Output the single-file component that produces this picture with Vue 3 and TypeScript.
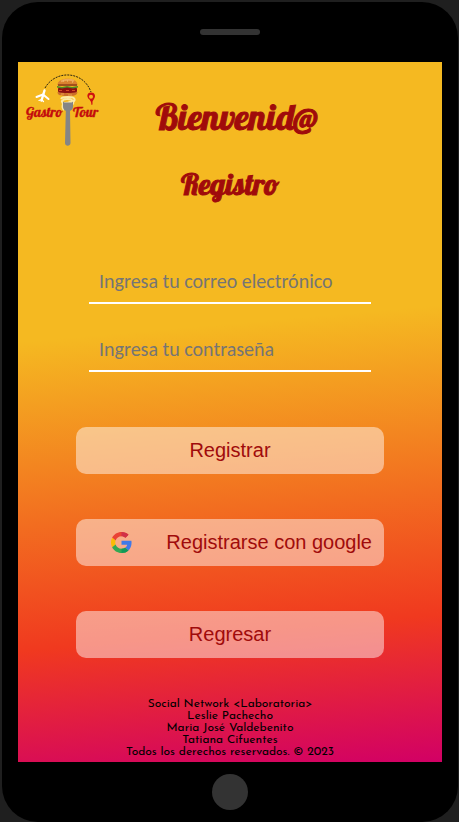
<script setup lang="ts">
import { ref } from 'vue'

const email = ref<string>('')
const password = ref<string>('')

const credits: string[] = [
  'Social Network <Laboratoria>',
  'Leslie Pachecho',
  'Maria José Valdebenito',
  'Tatiana Cifuentes',
  'Todos los derechos reservados. © 2023',
]
</script>

<template>
  <div class="phone">
    <div class="bezel"><span class="speaker"></span></div>

    <main class="screen">
      <header class="header">
        <svg class="logo" viewBox="0 0 84 84" role="img" aria-label="Gastro Tour">
          <path d="M25 22C35 4 63 4 71 26" fill="none" stroke="#2b2410" stroke-width="1" stroke-dasharray="2 1" />
          <g fill="none" stroke="#fff" stroke-linecap="round" stroke-linejoin="round">
            <path d="M24.500 24.500L21.500 34.500" stroke-width="2.400" />
            <path d="M16.500 31L23 28.500L28.500 33" stroke-width="2" />
            <path d="M19 34.500L21.500 33.500L23.500 35.500" stroke-width="1.200" />
          </g>
          <path d="M37.500 19C37 10.500 58 10.500 57.500 19z" fill="#d9822f" />
          <path d="M41 15.500c3-2 10-2.500 13-.5" fill="none" stroke="#efa957" stroke-width="2" />
          <path d="M43 15h1m3 0h1m4 1h1" stroke="#f3c77c" />
          <rect x="38" y="18" width="19" height="2" fill="#a3501c" />
          <rect x="38" y="21" width="19" height="6" rx="2" fill="#8e1010" />
          <path d="M37 20l5 1 5-1 5 1 6-1v1.500l-5 1-6-1-5 1-5-1z" fill="#4f8d25" />
          <path d="M39 24.500h3m4 0h3m3 0h3" stroke="#d84a28" />
          <path d="M37.500 26c6 1.500 14 1.500 20 0-.5 3.500-3 4-10 4s-10-.5-10-4z" fill="#cc6f2a" />
          <path d="M41 28h3m4 1h4" stroke="#eba04e" />
          <path
            d="M41 33c2-3 12-2 13-.5 2 2-1 4-4 3.500-4 2-9 1-8-1s8-3 11 0c1 2-1 5-3 4M42 37c3 2 7-1 10 1M43 38c-1 3 0 5 1 6"
            fill="none"
            stroke="#fbe9a6"
            stroke-width="2"
          />
          <path
            d="M43 36.500c0-1 1-1 1.200 0h7.600c.2-1 1.200-1 1.200 0v4.500c0 2-1.500 3-3 4l.5 32c0 3.500-5.500 3.500-5.500 0l.8-32c-1.300-.8-2.800-2-2.800-4z"
            fill="#858585"
          />
          <path
            d="M71 26.500c-4.500 0-4.500 5-1.500 7l1.500 2.500.5 3 1-.5v-3l1.500-2.500c2-3 1-6.500-3-6.500zm0 2.200a2 2 0 1 1 0 4 2 2 0 0 1 0-4z"
            fill="#cf1010"
            fill-rule="evenodd"
          />
          <text x="6" y="51">Gastro</text>
          <text x="53" y="51">Tour</text>
        </svg>
        <div class="titles">
          <h1>Bienvenid@</h1>
          <h2>Registro</h2>
        </div>
      </header>

      <form class="form" @submit.prevent>
        <div class="fields">
          <input v-model="email" type="email" aria-label="Correo electrónico" placeholder="Ingresa tu correo electrónico" />
          <input v-model="password" type="password" aria-label="Contraseña" placeholder="Ingresa tu contraseña" />
        </div>
        <div class="actions">
          <button type="submit">Registrar</button>
          <button type="button" class="google">
            <svg class="google-icon" viewBox="0 0 48 48" aria-hidden="true">
              <path fill="#ea4335" d="M24 9.500c3.540 0 6.710 1.220 9.210 3.600l6.850-6.850C35.900 2.380 30.470 0 24 0 14.620 0 6.510 5.380 2.560 13.220l7.980 6.190C12.430 13.720 17.740 9.500 24 9.500z" />
              <path fill="#d13048" d="M24 9.500c3.540 0 6.710 1.220 9.210 3.600l6.850-6.850C35.900 2.380 30.470 0 24 0z" />
              <path fill="#4079e8" d="M46.980 24.550c0-1.570-.15-3.090-.38-4.550H24v9.020h12.940c-.58 2.960-2.260 5.480-4.780 7.180l7.730 6c4.510-4.180 7.090-10.360 7.090-17.650z" />
              <path fill="#fbbc05" d="M10.530 28.590c-.48-1.450-.76-2.990-.76-4.590s.27-3.140.76-4.590l-7.980-6.190C.92 16.460 0 20.120 0 24c0 3.880.92 7.540 2.560 10.780z" />
              <path fill="#34a853" d="M24 48c6.480 0 11.930-2.130 15.890-5.810l-7.730-6c-2.150 1.450-4.920 2.300-8.160 2.300-6.260 0-11.570-4.220-13.470-9.910l-7.980 6.190C6.510 42.620 14.620 48 24 48z" />
              <path fill="#129958" d="M24 48c6.480 0 11.930-2.130 15.890-5.810l-7.730-6c-2.150 1.450-4.920 2.300-8.160 2.300z" />
            </svg>
            <span>Registrarse con google</span>
          </button>
          <button type="button">Regresar</button>
        </div>
      </form>

      <footer class="footer">
        <p v-for="line in credits" :key="line">{{ line }}</p>
      </footer>
    </main>

    <div class="bezel"><span class="home"></span></div>
  </div>
</template>

<style>
body {
  margin: 0;
  background: #1f1f1f;
}
</style>

<style scoped>
.phone {
  box-sizing: border-box;
  margin: 2px 1px 0 2px;
  padding: 0 16px;
  border-radius: 36px;
  background: #000;
}

.bezel {
  display: flex;
  align-items: center;
  justify-content: center;
  height: 60px;
}

.speaker {
  width: 60px;
  height: 6px;
  border-radius: 3px;
  background: #333;
}

.home {
  width: 36px;
  height: 36px;
  border-radius: 50%;
  background: #333;
}

.screen {
  display: flex;
  flex-direction: column;
  background: linear-gradient(175deg, #f5b921 0%, #f5b921 38%, #f0391f 80%, #d20065 100%);
}

.header {
  display: grid;
  grid-template-columns: 1fr auto 1fr;
}

.logo {
  width: 84px;
  height: 84px;
  margin: 4px 0 0 2px;
}

.logo text {
  font: 14px Lobster, "Liberation Serif", serif;
  fill: #c40d0d;
  stroke: #c40d0d;
  stroke-width: 0.3px;
}

.titles {
  padding-top: 30px;
  color: #a00b0b;
  text-align: center;
}

h1,
h2 {
  margin: 0;
  font-family: Lobster, "Liberation Serif", serif;
  font-weight: normal;
  -webkit-text-stroke: 1px #a00b0b;
}

h1 {
  padding-left: 14px;
  font-size: 36px;
  line-height: 50px;
}

h2 {
  margin-top: 22px;
  font-size: 30px;
  line-height: 40px;
}

.form {
  display: flex;
  flex-direction: column;
  gap: 55px;
  margin: 56px 58px 0;
}

.fields {
  display: flex;
  flex-direction: column;
  gap: 24px;
  padding: 0 13px;
}

input {
  box-sizing: border-box;
  width: 100%;
  height: 44px;
  padding: 0 10px;
  border: 0;
  border-bottom: 2px solid #fff;
  outline: none;
  background: transparent;
  color: #333;
  font: 20px Carlito, Lato, sans-serif;
}

input::placeholder {
  color: #757575;
}

.actions {
  display: flex;
  flex-direction: column;
  gap: 45px;
}

button {
  display: flex;
  align-items: center;
  justify-content: center;
  height: 47px;
  padding: 0 12px;
  border: 0;
  border-radius: 10px;
  background: rgba(255, 255, 255, 0.47);
  color: #a00b0b;
  font: 20px "Liberation Sans", Arial, sans-serif;
  cursor: pointer;
}

.google {
  justify-content: flex-end;
  gap: 34px;
}

.google-icon {
  width: 21px;
  height: 21px;
}

.footer {
  margin-top: 40px;
  padding-bottom: 4px;
  color: #000;
  font: 12px/12px "Josefin Sans", Lato, sans-serif;
  text-align: center;
}

.footer p {
  margin: 0;
}
</style>
